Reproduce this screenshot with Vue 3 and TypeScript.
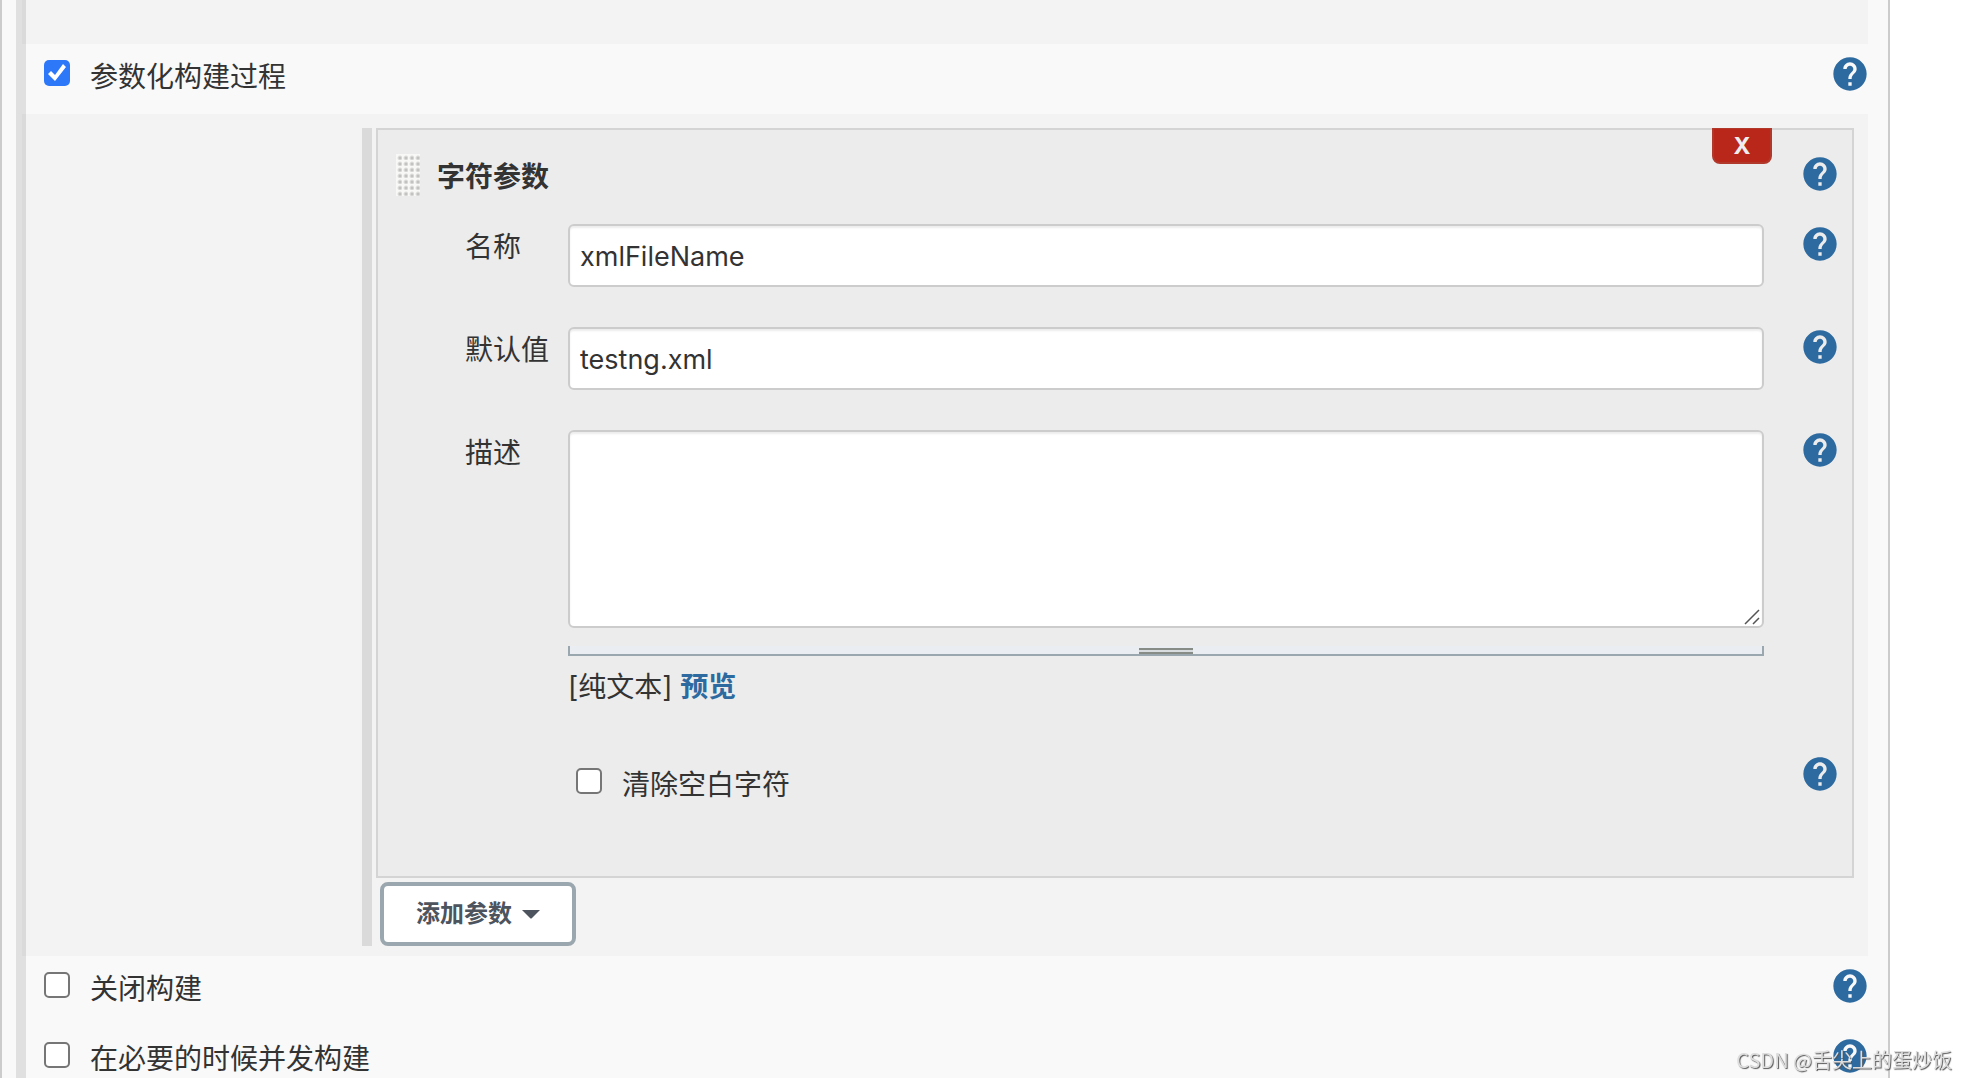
<script setup lang="ts">
import { defineComponent, h, ref } from 'vue'

const HELP_PATH =
  'M12 2C6.48 2 2 6.48 2 12s4.48 10 10 10 10-4.48 10-10S17.52 2 12 2zm1 17h-2v-2h2v2zm2.07-7.75l-.9.92C13.45 12.9 13 13.5 13 15h-2v-.5c0-1.1.45-2.1 1.17-2.83l1.24-1.26c.37-.36.59-.86.59-1.41 0-1.1-.9-2-2-2s-2 .9-2 2H8c0-2.21 1.79-4 4-4s4 1.79 4 4c0 .88-.36 1.68-.93 2.25z'

const HelpIcon = defineComponent({
  props: { topic: { type: String, required: true } },
  setup(props) {
    return () =>
      h('a', { href: '#', 'aria-label': '帮助: ' + props.topic }, [
        h('svg', { viewBox: '0 0 24 24', width: 40, height: 40, style: 'display:block' }, [
          h('path', { d: HELP_PATH, fill: 'currentColor' }),
        ]),
      ])
  },
})

const parameterized = ref(true)
const paramName = ref('xmlFileName')
const defaultValue = ref('testng.xml')
const description = ref('')
const trim = ref(false)
const options = ref([
  { id: 'disable', label: '关闭构建', checked: false },
  { id: 'concurrent', label: '在必要的时候并发构建', checked: false },
])
</script>

<template>
  <div class="page">
    <main class="config">
      <form class="section" @submit.prevent>
        <div class="shaded spacer"></div>

        <div class="option">
          <input id="parameterized" v-model="parameterized" type="checkbox" class="check" />
          <label for="parameterized">参数化构建过程</label>
          <HelpIcon class="help" topic="参数化构建过程" />
        </div>

        <div class="shaded nested">
          <div class="group">
            <fieldset class="card">
              <button type="button" class="remove">X</button>
              <div class="line header">
                <span class="grip"></span>
                <h3 class="title">字符参数</h3>
                <HelpIcon class="help" topic="字符参数" />
              </div>
              <div class="line">
                <label class="name" for="name">名称</label>
                <div class="field"><input id="name" v-model="paramName" type="text" class="text" /></div>
                <HelpIcon class="help" topic="名称" />
              </div>
              <div class="line">
                <label class="name" for="default">默认值</label>
                <div class="field"><input id="default" v-model="defaultValue" type="text" class="text" /></div>
                <HelpIcon class="help" topic="默认值" />
              </div>
              <div class="line">
                <label class="name" for="desc">描述</label>
                <div class="field">
                  <div class="area-wrap">
                    <textarea id="desc" v-model="description" class="text area"></textarea>
                    <svg class="resizer" viewBox="0 0 16 16" width="16" height="16">
                      <path d="M1 15L15 1M9 15L15 9" stroke="#555" stroke-width="1.5" />
                    </svg>
                  </div>
                  <div class="handle"><span></span></div>
                  <div class="format">[纯文本] <a href="#">预览</a></div>
                </div>
                <HelpIcon class="help" topic="描述" />
              </div>
              <div class="line">
                <span class="name"></span>
                <div class="field trim">
                  <input id="trim" v-model="trim" type="checkbox" class="check" />
                  <label for="trim">清除空白字符</label>
                </div>
                <HelpIcon class="help" topic="清除空白字符" />
              </div>
            </fieldset>
            <button type="button" class="add">
              添加参数
              <svg viewBox="0 0 18 9" width="18" height="9"><path d="M0 0h18L10 8q-1 1-2 0z" fill="currentColor" /></svg>
            </button>
          </div>
        </div>

        <div v-for="o in options" :key="o.id" class="option">
          <input :id="o.id" v-model="o.checked" type="checkbox" class="check" />
          <label :for="o.id">{{ o.label }}</label>
          <HelpIcon class="help" :topic="o.label" />
        </div>
      </form>
    </main>
    <div class="watermark">CSDN @舌尖上的蛋炒饭</div>
  </div>
</template>

<style>
body {
  background: #fff;
}
</style>

<style scoped>
.page {
  height: 100vh;
  overflow: hidden;
  color: #333;
  font-family: Inter, 'Noto Sans CJK SC', sans-serif;
  font-size: 28px;
  line-height: 46px;
}
.page * {
  box-sizing: border-box;
}
.config {
  min-height: 100%;
  margin-right: 76px;
  padding: 0 20px 0 14px;
  border: solid #ccc;
  border-width: 0 2px;
  background: #f9f9f9;
}
.section {
  border-left: 10px solid #e0e0e0;
}
.shaded {
  margin-left: -4px;
  border-left: 4px solid #dadada;
  background: #f3f3f3;
}
.spacer {
  height: 44px;
}
.option {
  display: flex;
  align-items: flex-start;
  height: 70px;
  padding: 10px 0 10px 18px;
}
.help {
  flex: none;
  margin-left: auto;
  color: #2d6aa0;
}
.option .help {
  margin-right: -2px;
}
.check {
  appearance: none;
  flex: none;
  width: 26px;
  height: 26px;
  margin: 6px 20px 0 0;
  border: 2px solid #767676;
  border-radius: 5px;
  background: #fff;
}
.check:checked {
  border: 0;
  background: #2d78f8;
}
.check:checked::before {
  content: '';
  display: block;
  width: 26px;
  height: 26px;
  background: #fff;
  clip-path: polygon(4px 14px, 7px 11px, 11px 15px, 19px 4px, 22px 7px, 11px 21px);
}
.nested {
  padding: 14px 14px 10px 336px;
}
.group {
  padding-left: 4px;
  border-left: 10px solid #dadada;
}
.card {
  position: relative;
  display: flex;
  flex-direction: column;
  gap: 40px;
  min-width: 0;
  margin: 0;
  padding: 24px 12px 68px 18px;
  border: 2px solid #d4d4d4;
  background: #ececec;
}
.line {
  display: flex;
  align-items: flex-start;
}
.header {
  height: 40px;
  margin-bottom: -10px;
}
.grip {
  width: 24px;
  height: 42px;
  background: radial-gradient(circle at 4px 4px, #b4b4b2 0, #c8c8c6 1px, #f8f8f6 3px) 0 0 / 6px 6px;
}
.title {
  margin: 0 0 0 17px;
  font-size: 28px;
  line-height: 46px;
  font-weight: 600;
}
.name {
  flex: none;
  width: 172px;
  padding-left: 69px;
}
.field {
  flex: 1;
  min-width: 0;
  margin-right: 36px;
}
.text {
  display: block;
  width: 100%;
  height: 63px;
  padding: 1px 10px 0;
  border: 2px solid #ccc;
  border-radius: 6px;
  background: #fff;
  box-shadow: inset 0 2px 2px rgba(0, 0, 0, 0.075);
  color: #333;
  font: inherit;
  font-size: 27px;
}
.area-wrap {
  position: relative;
}
.area {
  height: 198px;
  resize: none;
}
.resizer {
  position: absolute;
  right: 4px;
  bottom: 3px;
  pointer-events: none;
}
.handle {
  height: 10px;
  margin-top: 18px;
  border: solid #9ba7af;
  border-width: 0 2px 2px;
  background: #eaeef2;
}
.handle span {
  display: block;
  width: 54px;
  height: 6px;
  margin: 0 auto;
  border: solid #888c86;
  border-width: 2px 0;
  background: #d8dcde;
  transform: translateY(2px);
}
.format {
  padding: 8px 0 4px;
}
.format a {
  color: #2d6aa0;
  font-weight: 700;
  text-decoration: none;
}
.trim {
  display: flex;
  align-items: flex-start;
  padding: 8px 0 0 8px;
}
.remove {
  position: absolute;
  top: -2px;
  right: 80px;
  width: 60px;
  height: 36px;
  padding: 0;
  border: 2px solid #b0392c;
  border-width: 1px 2px 2px;
  border-radius: 0 0 8px 8px;
  background: #b9261a;
  color: #eee;
  font: 700 23px/32px Inter, sans-serif;
}
.add {
  display: flex;
  align-items: center;
  gap: 10px;
  height: 64px;
  margin: 4px 0 0 4px;
  padding: 0 32px;
  border: 4px solid #9ba7af;
  border-radius: 8px;
  background: #fff;
  color: #4d545d;
  font: 600 24px/36px Inter, 'Noto Sans CJK SC', sans-serif;
}
.watermark {
  position: fixed;
  right: 14px;
  bottom: 4px;
  color: #ddd;
  font: 20px/28px 'Noto Sans CJK SC', sans-serif;
  text-shadow: 1px 1px 1px #555;
}
</style>
